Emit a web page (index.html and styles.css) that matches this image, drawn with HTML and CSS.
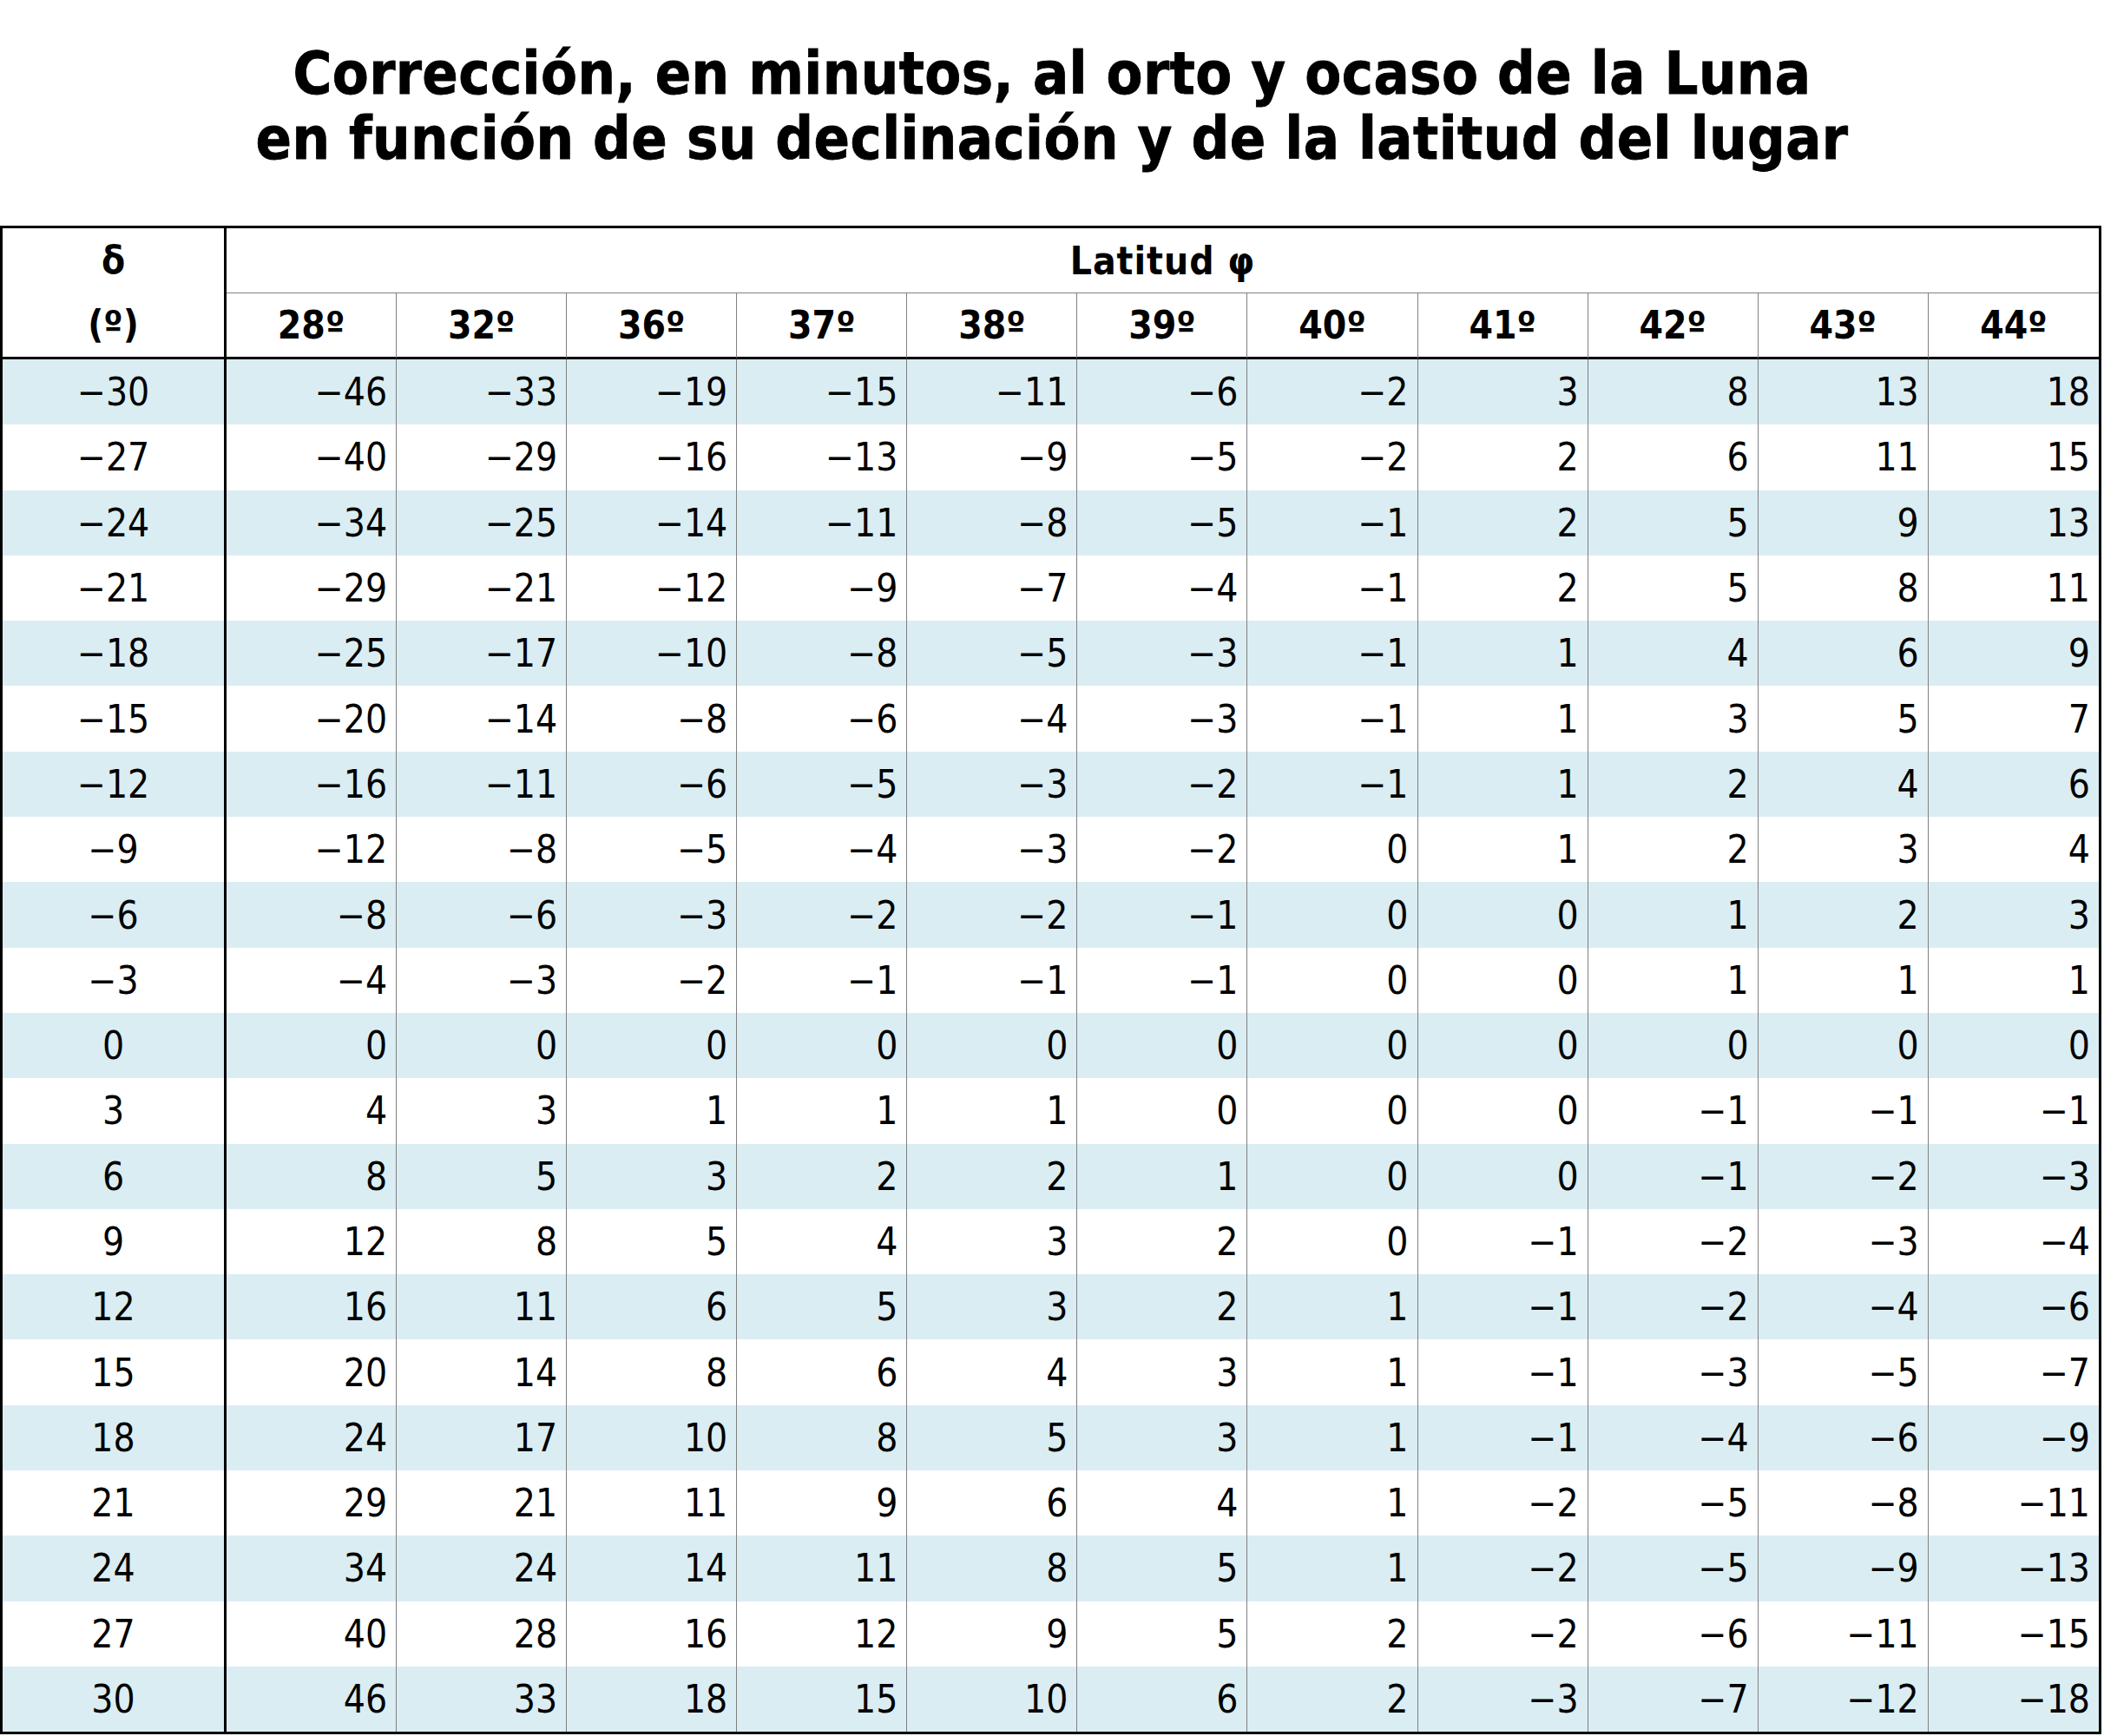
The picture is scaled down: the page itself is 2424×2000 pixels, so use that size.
FILE: index.html
```html
<!DOCTYPE html>
<html lang="es">
<head>
<meta charset="utf-8">
<title>Corrección al orto y ocaso de la Luna</title>
<link rel="stylesheet" href="styles.css">
</head>
<body>
<h1 class="title">Corrección, en minutos, al orto y ocaso de la Luna<br>en función de su declinación y de la latitud del lugar</h1>
<table class="tabla">
<colgroup><col class="c-dec"><col span="11"></colgroup>
<thead>
<tr class="h1row"><th class="dec" rowspan="2"><span class="dl">δ</span><span class="dl">(º)</span></th><th class="lat" colspan="11">Latitud φ</th></tr>
<tr class="h2row"><th>28º</th><th>32º</th><th>36º</th><th>37º</th><th>38º</th><th>39º</th><th>40º</th><th>41º</th><th>42º</th><th>43º</th><th>44º</th></tr>
</thead>
<tbody>
<tr class="alt"><td>−30</td><td>−46</td><td>−33</td><td>−19</td><td>−15</td><td>−11</td><td>−6</td><td>−2</td><td>3</td><td>8</td><td>13</td><td>18</td></tr>
<tr><td>−27</td><td>−40</td><td>−29</td><td>−16</td><td>−13</td><td>−9</td><td>−5</td><td>−2</td><td>2</td><td>6</td><td>11</td><td>15</td></tr>
<tr class="alt"><td>−24</td><td>−34</td><td>−25</td><td>−14</td><td>−11</td><td>−8</td><td>−5</td><td>−1</td><td>2</td><td>5</td><td>9</td><td>13</td></tr>
<tr><td>−21</td><td>−29</td><td>−21</td><td>−12</td><td>−9</td><td>−7</td><td>−4</td><td>−1</td><td>2</td><td>5</td><td>8</td><td>11</td></tr>
<tr class="alt"><td>−18</td><td>−25</td><td>−17</td><td>−10</td><td>−8</td><td>−5</td><td>−3</td><td>−1</td><td>1</td><td>4</td><td>6</td><td>9</td></tr>
<tr><td>−15</td><td>−20</td><td>−14</td><td>−8</td><td>−6</td><td>−4</td><td>−3</td><td>−1</td><td>1</td><td>3</td><td>5</td><td>7</td></tr>
<tr class="alt"><td>−12</td><td>−16</td><td>−11</td><td>−6</td><td>−5</td><td>−3</td><td>−2</td><td>−1</td><td>1</td><td>2</td><td>4</td><td>6</td></tr>
<tr><td>−9</td><td>−12</td><td>−8</td><td>−5</td><td>−4</td><td>−3</td><td>−2</td><td>0</td><td>1</td><td>2</td><td>3</td><td>4</td></tr>
<tr class="alt"><td>−6</td><td>−8</td><td>−6</td><td>−3</td><td>−2</td><td>−2</td><td>−1</td><td>0</td><td>0</td><td>1</td><td>2</td><td>3</td></tr>
<tr><td>−3</td><td>−4</td><td>−3</td><td>−2</td><td>−1</td><td>−1</td><td>−1</td><td>0</td><td>0</td><td>1</td><td>1</td><td>1</td></tr>
<tr class="alt"><td>0</td><td>0</td><td>0</td><td>0</td><td>0</td><td>0</td><td>0</td><td>0</td><td>0</td><td>0</td><td>0</td><td>0</td></tr>
<tr><td>3</td><td>4</td><td>3</td><td>1</td><td>1</td><td>1</td><td>0</td><td>0</td><td>0</td><td>−1</td><td>−1</td><td>−1</td></tr>
<tr class="alt"><td>6</td><td>8</td><td>5</td><td>3</td><td>2</td><td>2</td><td>1</td><td>0</td><td>0</td><td>−1</td><td>−2</td><td>−3</td></tr>
<tr><td>9</td><td>12</td><td>8</td><td>5</td><td>4</td><td>3</td><td>2</td><td>0</td><td>−1</td><td>−2</td><td>−3</td><td>−4</td></tr>
<tr class="alt"><td>12</td><td>16</td><td>11</td><td>6</td><td>5</td><td>3</td><td>2</td><td>1</td><td>−1</td><td>−2</td><td>−4</td><td>−6</td></tr>
<tr><td>15</td><td>20</td><td>14</td><td>8</td><td>6</td><td>4</td><td>3</td><td>1</td><td>−1</td><td>−3</td><td>−5</td><td>−7</td></tr>
<tr class="alt"><td>18</td><td>24</td><td>17</td><td>10</td><td>8</td><td>5</td><td>3</td><td>1</td><td>−1</td><td>−4</td><td>−6</td><td>−9</td></tr>
<tr><td>21</td><td>29</td><td>21</td><td>11</td><td>9</td><td>6</td><td>4</td><td>1</td><td>−2</td><td>−5</td><td>−8</td><td>−11</td></tr>
<tr class="alt"><td>24</td><td>34</td><td>24</td><td>14</td><td>11</td><td>8</td><td>5</td><td>1</td><td>−2</td><td>−5</td><td>−9</td><td>−13</td></tr>
<tr><td>27</td><td>40</td><td>28</td><td>16</td><td>12</td><td>9</td><td>5</td><td>2</td><td>−2</td><td>−6</td><td>−11</td><td>−15</td></tr>
<tr class="alt"><td>30</td><td>46</td><td>33</td><td>18</td><td>15</td><td>10</td><td>6</td><td>2</td><td>−3</td><td>−7</td><td>−12</td><td>−18</td></tr>
</tbody>
</table>
</body>
</html>
```
FILE: styles.css
```css
html, body {
  margin: 0;
  padding: 0;
  background: #ffffff;
  color: #000000;
}
body {
  font-family: "DejaVu Sans Condensed", "DejaVu Sans", sans-serif;
  font-stretch: condensed;
  width: 2424px;
}
.title {
  margin: 47px 0 63px 0;
  font-size: 68px;
  line-height: 75px;
  letter-spacing: 0.4px;
  font-weight: bold;
  text-align: center;
  -webkit-text-stroke: 0.8px #000;
}
.tabla {
  width: 2421px;
  table-layout: fixed;
  border-collapse: separate;
  border-spacing: 0;
  border: 3px solid #000;
  font-size: 44px;
}
.c-dec {
  width: 258px;
}
.tabla th,
.tabla td {
  box-sizing: border-box;
  padding: 0;
  vertical-align: middle;
}
.tabla th {
  font-weight: bold;
  text-align: center;
}
.h1row {
  height: 75px;
}
.h2row {
  height: 76px;
}
.dec {
  border-right: 3px solid #000;
  border-bottom: 3px solid #000;
}
.dl {
  display: block;
  line-height: 74px;
}
.lat {
  border-bottom: 1px solid #808080;
  letter-spacing: 1px;
}
.h2row th {
  border-right: 1px solid #808080;
  border-bottom: 3px solid #000;
}
.h2row th:last-child {
  border-right: 0;
}
.tabla tbody tr {
  height: 75.3px;
}
.tabla td {
  text-align: right;
  padding-right: 10px;
  border-right: 1px solid #808080;
}
.tabla td:first-child {
  text-align: center;
  padding-right: 0;
  border-right: 3px solid #000;
}
.tabla td:last-child {
  border-right: 0;
}
.alt td {
  background: #daedf3;
}
```
